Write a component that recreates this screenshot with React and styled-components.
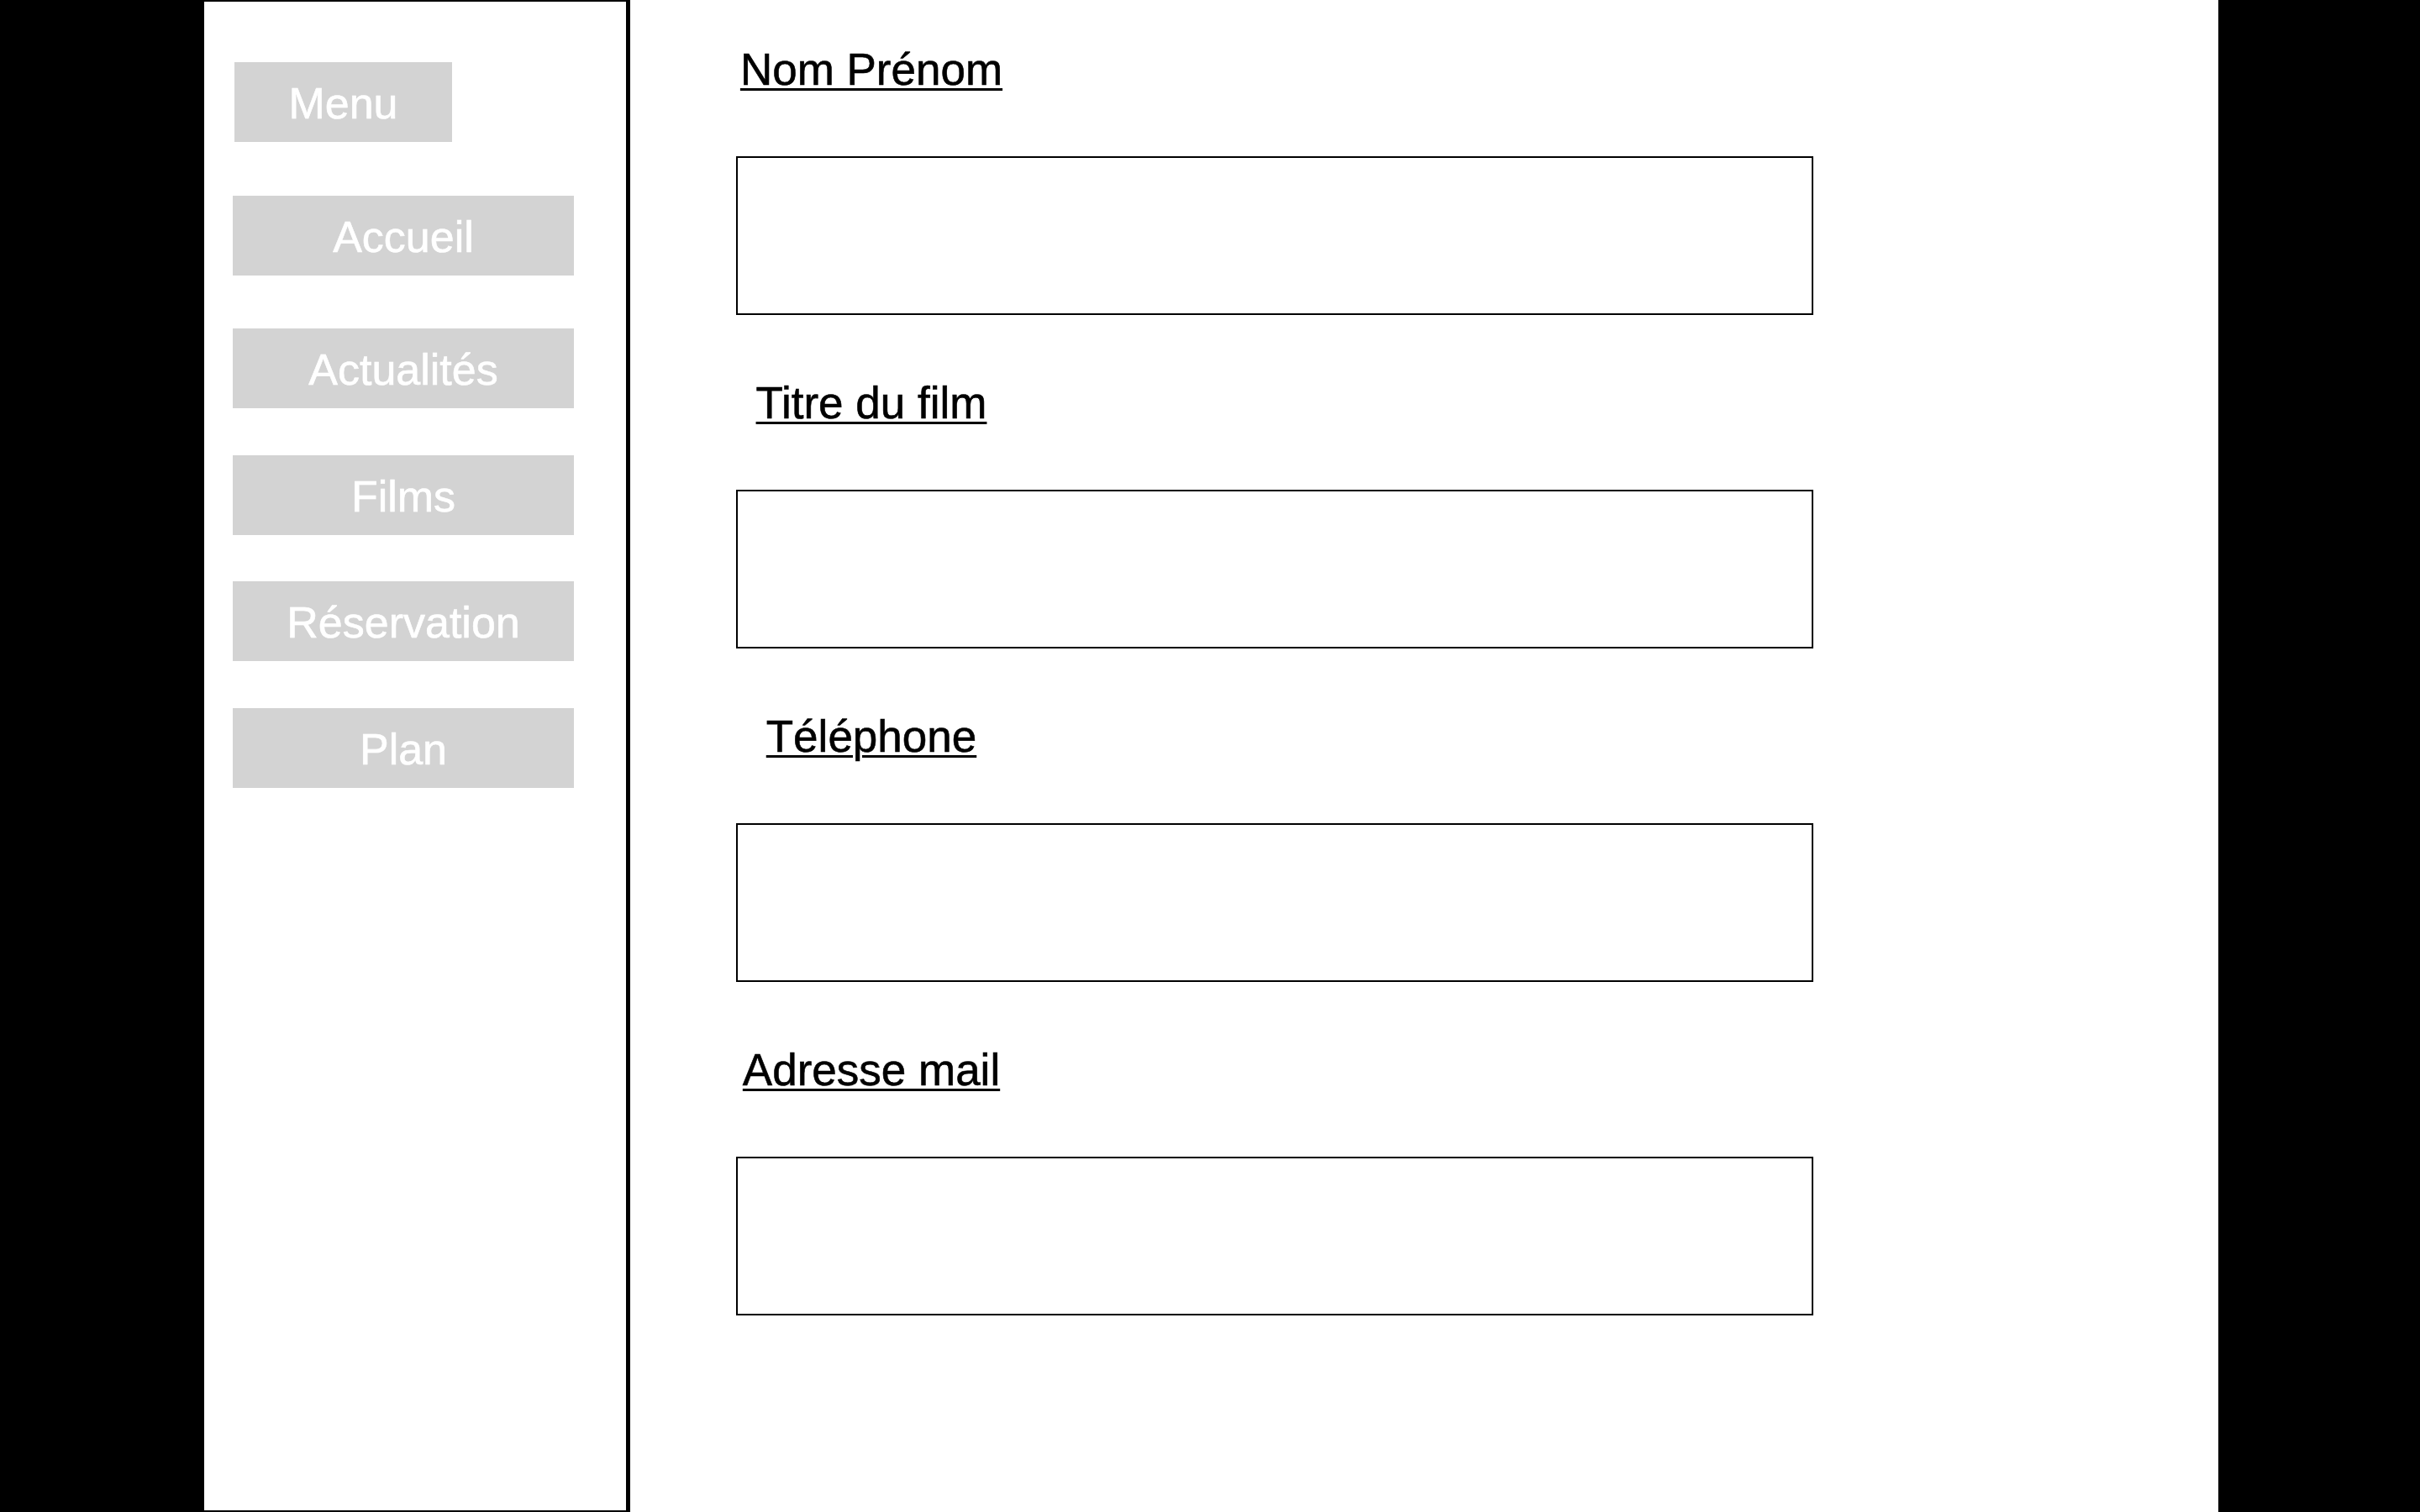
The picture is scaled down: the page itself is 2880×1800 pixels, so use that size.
import React from "react";
import styled, { createGlobalStyle } from "styled-components";

const GlobalStyle = createGlobalStyle`
  html, body {
    margin: 0;
    padding: 0;
    background: #000;
  }
  * {
    box-sizing: border-box;
  }
`;

const Page = styled.div`
  width: 100%;
  height: 1800px;
  background: #000;
  display: flex;
  justify-content: flex-start;
  font-family: "Liberation Sans", Arial, sans-serif;
`;

const Frame = styled.div`
  width: 2399px;
  height: 100%;
  margin-left: 241px;
  background: #fff;
  display: flex;
`;

const Sidebar = styled.nav`
  width: 509px;
  height: 100%;
  border-top: 2px solid #000;
  border-bottom: 2px solid #000;
  border-left: 2px solid #000;
  border-right: 5px solid #000;
  display: flex;
  flex-direction: column;
  align-items: flex-start;
  padding: 72px 0 0 34px;
`;

const NavButton = styled.div`
  width: ${(props) => props.$width}px;
  height: 95px;
  margin-left: ${(props) => props.$offset || 0}px;
  margin-bottom: ${(props) => props.$spaceAfter}px;
  background: #d3d3d3;
  color: #fff;
  font-size: 52px;
  -webkit-text-stroke: 0.6px #fff;
  display: flex;
  justify-content: center;
  align-items: center;
  padding-top: 2px;
`;

const Main = styled.main`
  flex: 1;
  display: flex;
  flex-direction: column;
  padding: 52px 0 0 126px;
`;

const Field = styled.div`
  display: flex;
  flex-direction: column;
  margin-bottom: 74px;
`;

const Label = styled.div`
  width: 322px;
  height: 62px;
  line-height: 62px;
  margin-bottom: 72px;
  text-align: center;
  font-size: 53px;
  color: #000;
  -webkit-text-stroke: 0.6px #000;
  text-decoration: underline;
  text-decoration-thickness: 3px;
  text-underline-offset: 4px;
  white-space: nowrap;
`;

const InputBox = styled.div`
  width: 1282px;
  height: 189px;
  border: 2px solid #000;
  background: #fff;
`;

const menuItems = [
  { label: "Menu", width: 259, offset: 2, spaceAfter: 64 },
  { label: "Accueil", width: 406, spaceAfter: 63 },
  { label: "Actualités", width: 406, spaceAfter: 56 },
  { label: "Films", width: 406, spaceAfter: 55 },
  { label: "Réservation", width: 406, spaceAfter: 56 },
  { label: "Plan", width: 406, spaceAfter: 0 },
];

const fields = ["Nom Prénom", "Titre du film", "Téléphone", "Adresse mail"];

const App = () => {
  return (
    <>
      <GlobalStyle />
      <Page>
        <Frame>
          <Sidebar>
            {menuItems.map((item) => (
              <NavButton
                key={item.label}
                $width={item.width}
                $offset={item.offset}
                $spaceAfter={item.spaceAfter}
              >
                {item.label}
              </NavButton>
            ))}
          </Sidebar>
          <Main>
            {fields.map((field) => (
              <Field key={field}>
                <Label>{field}</Label>
                <InputBox />
              </Field>
            ))}
          </Main>
        </Frame>
      </Page>
    </>
  );
};

export default App;
